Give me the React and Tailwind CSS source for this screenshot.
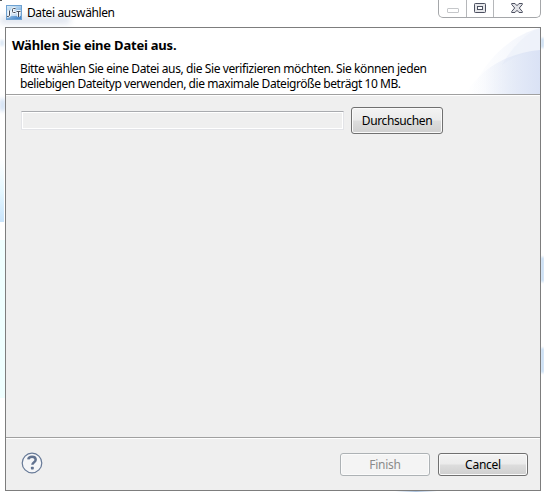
function AppIcon() {
  return (
    <svg className="h-4 w-4 shrink-0" viewBox="0 0 16 16">
      <defs>
        <linearGradient id="jct" x1="0" y1="0" x2="0.600" y2="1">
          <stop offset="0" stopColor="#e0f0fa" />
          <stop offset="0.5" stopColor="#a3c9ea" />
          <stop offset="1" stopColor="#4c8aca" />
        </linearGradient>
      </defs>
      <rect x="0.5" y="0.5" width="15" height="14" fill="url(#jct)" stroke="#6fa2d2" />
      <rect x="1" y="5.500" width="14" height="5.500" fill="#fff" opacity="0.600" />
      <g fill="none">
        <path d="M3.500 5.500v5q0 1-2.500 1M9.500 3.500h-2q-1 0-1 1v2q0 1 1 1h2M10.500 6.500h4M12.500 6.500v5.500" stroke="#fff" strokeOpacity="0.900" strokeWidth="2.400" />
        <path d="M3.500 5.500v5q0 1-2.500 1M9.500 3.500h-2q-1 0-1 1v2q0 1 1 1h2M10.500 6.500h4M12.500 6.500v5.500" stroke="#454b58" strokeWidth="1" />
      </g>
    </svg>
  );
}

function WindowControls() {
  return (
    <div className="flex h-[18px] w-[103px] rounded-b-[5px] border border-t-0 border-[#a5a7aa] bg-white">
      <div className="flex w-7 justify-center border-r border-[#b5b7ba] pt-2">
        <div className="h-[5px] w-3 rounded-[1px] border border-[#c5c7ca]" />
      </div>
      <div className="flex w-[27px] justify-center border-r border-[#b5b7ba] pt-[3px]">
        <svg className="h-[10px] w-3" viewBox="0 0 12 10">
          <rect x="0.500" y="0.500" width="11" height="9" rx="0.800" fill="#e6e7ea" stroke="#4c5060" />
          <rect x="3.500" y="3.500" width="5" height="3" fill="#fff" stroke="#4c5060" />
        </svg>
      </div>
      <div className="flex flex-1 justify-center pt-[3px]">
        <svg className="h-[10px] w-3" viewBox="0 0 12 10">
          <path d="M.7.500H4L6 2.700 8 .500h3.300v1L8.300 5l3 3.500v1H8L6 7.300 4 9.500H.7v-1l3-3.500-3-3.500z" fill="#e2e3e7" stroke="#4c5060" strokeWidth="1" />
        </svg>
      </div>
    </div>
  );
}

function HeaderSwoosh() {
  return (
    <svg className="absolute right-0 top-0 h-[66px] w-[75px]" viewBox="0 0 75 66">
      <defs>
        <linearGradient id="fade">
          <stop offset="0" stopColor="#dce4f5" stopOpacity="0" />
          <stop offset="0.250" stopColor="#dce4f5" stopOpacity="0.100" />
          <stop offset="0.650" stopColor="#dce4f5" stopOpacity="0.650" />
          <stop offset="1" stopColor="#dae2f5" />
        </linearGradient>
        <linearGradient id="fadeSoft">
          <stop offset="0" stopColor="#edf1fa" stopOpacity="0" />
          <stop offset="1" stopColor="#e9eef9" />
        </linearGradient>
      </defs>
      <path d="M5 66C18 35 43 8 75 0v66z" fill="url(#fadeSoft)" opacity="0.700" />
      <path d="M37 37C46 21 59 6 75 0v22C60 24 48 29 37 37z" fill="#edf1fa" opacity="0.700" />
      <path d="M0 66C17 40 42 25 75 22v44z" fill="url(#fade)" />
    </svg>
  );
}

function HelpIcon() {
  return (
    <svg className="-mt-px h-[22px] w-[22px]" viewBox="0 0 22 22">
      <circle cx="11" cy="11" r="9.800" fill="#f5f6f8" stroke="#667997" strokeWidth="1.200" />
      <path d="M7.300 7.400C7.600 5.600 9 4.800 11 4.800c2.200 0 3.700 1.100 3.700 3 0 2.500-3.300 2.300-3.300 4.900" fill="none" stroke="#61728f" strokeWidth="2.500" />
      <rect x="9.900" y="14.700" width="2.900" height="2.700" rx="0.700" fill="#61728f" />
    </svg>
  );
}

export default function App() {
  return (
    <div className="relative flex h-[492px] w-[544px] flex-col overflow-hidden bg-white font-['Noto_Sans','Open_Sans',sans-serif] text-[12px] text-black">
      <div className="absolute left-0 top-[17px] h-[6px] w-[70px] bg-[#bdc9de] opacity-60 blur-[3px]" />
      <div className="absolute left-0 top-0 h-px w-[2px] bg-[#555]" />
      <div className="absolute left-0 top-[40px] h-[6px] w-1 bg-[#dce8f6] blur-[1px]" />
      <div className="absolute left-0 top-[99px] h-3 w-[5px] bg-[#cbdcf1] blur-[2px]" />
      <div className="absolute left-0 top-[158px] h-[64px] w-1 bg-linear-to-b from-white via-[#e6f8ff] to-[#c9e4fb]" />
      <div className="absolute left-0 top-[240px] h-[158px] w-[5px] bg-[#efffff]" />
      <div className="absolute left-[541px] top-[38px] h-[10px] w-[3px] bg-[#c8dcf1] blur-[1px]" />
      <div className="absolute left-[541px] top-[257px] h-[25px] w-[3px] bg-[#c2daf3] blur-[1px]" />
      <div className="absolute left-[541px] top-[348px] h-[25px] w-[3px] bg-[#c2daf3] blur-[1px]" />
      <div className="absolute left-[395px] top-[491px] h-px w-[42px] bg-linear-to-r from-white via-[#a9c0dc] to-white" />

      <div className="relative flex h-[27px] shrink-0 justify-between pl-[6px] pr-[3px]">
        <div className="flex pt-[5px]">
          <AppIcon />
          <span className="ml-[5px] whitespace-nowrap leading-4 tracking-[-0.400px]">Datei auswählen</span>
        </div>
        <WindowControls />
      </div>

      <main className="relative ml-[5px] flex h-[464px] w-[536px] flex-col border border-[#7d7d7d] bg-[#efefef]">
        <header className="relative h-[67px] shrink-0 border-b border-[#a0a0a0] bg-white">
          <HeaderSwoosh />
          <h1 className="relative pl-[6px] pt-[9px] text-[13px] font-bold leading-4 tracking-[-0.210px]">
            <span className="whitespace-nowrap">Wählen Sie eine Datei aus.</span>
          </h1>
          <div className="relative whitespace-nowrap pl-[14px] pt-[8px] leading-[15px]">
            <p><span className="tracking-[-0.400px]">Bitte wählen Sie eine Datei aus, die Sie verifizieren möchten. Sie können jeden</span></p>
            <p><span className="tracking-[-0.440px]">beliebigen Dateityp verwenden, die maximale Dateigröße beträgt 10 MB.</span></p>
          </div>
        </header>

        <section className="flex h-[343px] shrink-0 items-start border-b border-[#a0a0a0] border-t border-t-white pl-[15px] pt-[11px]">
          <div className="mt-[4px] h-[19px] w-[323px] border border-[#e3e4e8] border-t-[#a9abaf]">
            <div className="h-full border border-white bg-[#efefef]" />
          </div>
          <button className="ml-[7px] h-[27px] w-[92px] rounded-[3px] border border-[#707070] bg-[linear-gradient(#f3f3f3_0%,#ebebeb_48%,#dddddd_52%,#cfcfcf_100%)] p-0 shadow-[inset_0_0_0_1px_#fafafa]">
            <span className="tracking-[-0.380px]">Durchsuchen</span>
          </button>
        </section>

        <footer className="flex flex-1 items-start border-t border-white pl-[15px] pr-[12px] pt-[14px]">
          <HelpIcon />
          <button disabled className="ml-auto h-[23px] w-[90px] rounded-[3px] border border-[#adb2b5] bg-[#f4f4f4] p-0 text-[#8b8b8b] shadow-[inset_0_0_0_1px_#fbfbfb]">
            <span className="tracking-[-0.250px]">Finish</span>
          </button>
          <button className="ml-[8px] h-[23px] w-[90px] rounded-[3px] border border-[#707070] bg-[linear-gradient(#f3f3f3_0%,#ebebeb_48%,#dddddd_52%,#cfcfcf_100%)] p-0 shadow-[inset_0_0_0_1px_#fafafa]">
            <span className="tracking-[-0.250px]">Cancel</span>
          </button>
        </footer>
      </main>
    </div>
  );
}
